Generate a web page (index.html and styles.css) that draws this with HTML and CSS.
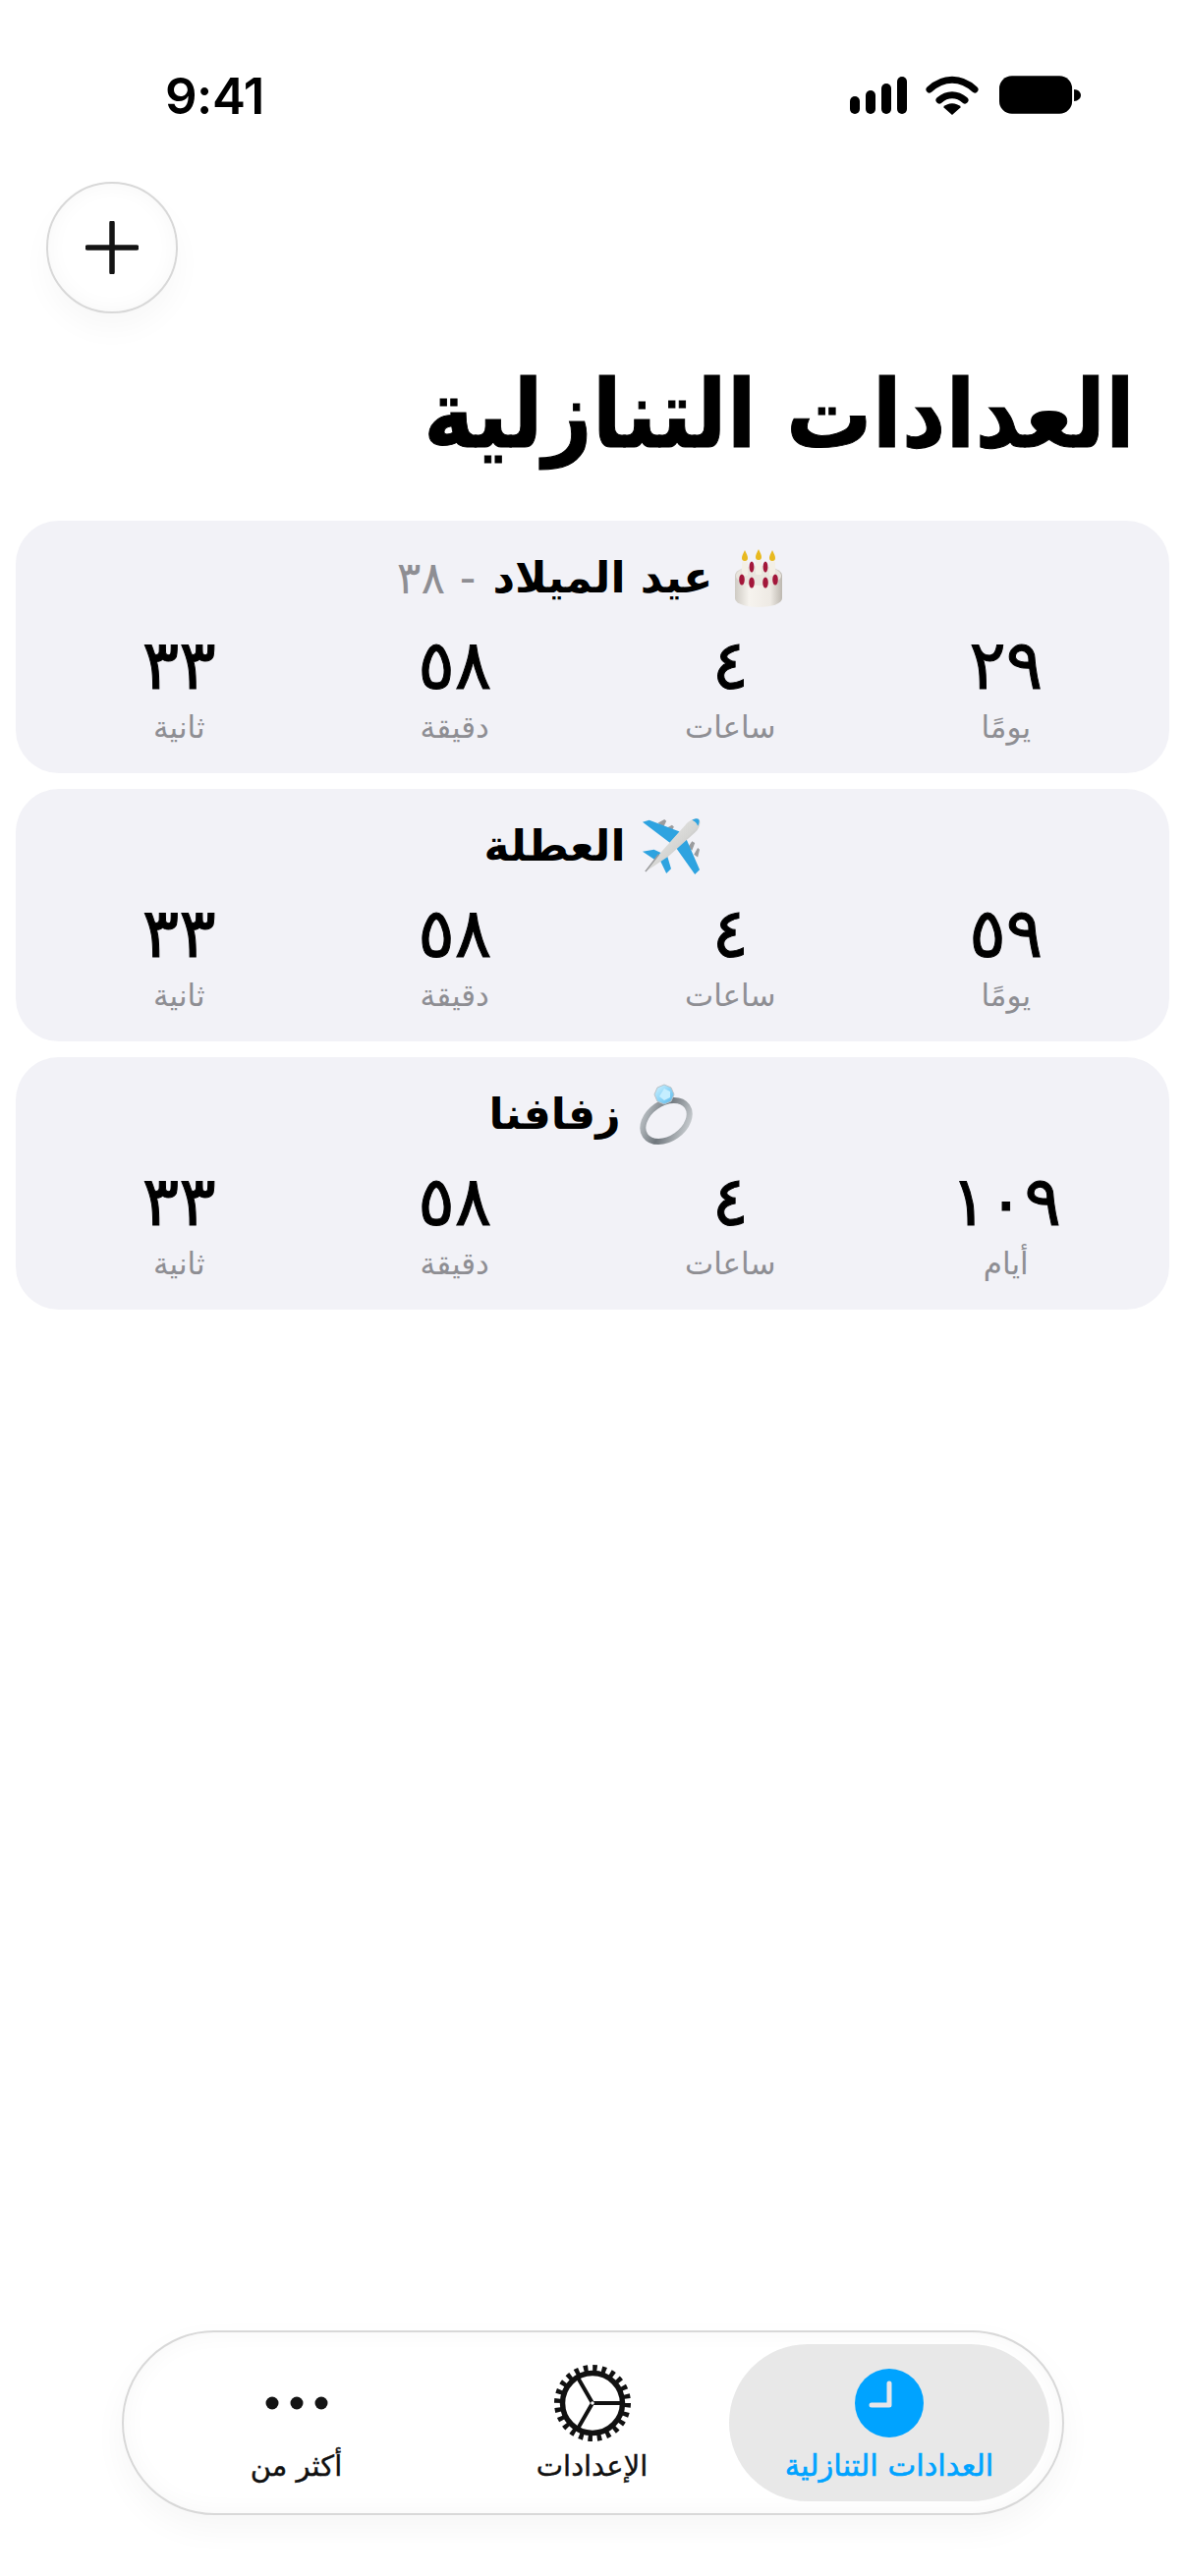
FILE: index.html
```html
<!DOCTYPE html>
<html lang="ar" dir="rtl">
<head>
<meta charset="utf-8">
<title>العدادات التنازلية</title>
<link rel="stylesheet" href="styles.css">
</head>
<body>
<svg class="defs" width="0" height="0" aria-hidden="true">
  <defs>
    <linearGradient id="cakeBody" x1="0" y1="0" x2="1" y2="0">
      <stop offset="0" stop-color="#cfcbc4"/><stop offset=".3" stop-color="#f6f3ee"/><stop offset=".75" stop-color="#eeeae4"/><stop offset="1" stop-color="#bdb8b0"/>
    </linearGradient>
    <linearGradient id="planeBody" x1="0" y1="0" x2="1" y2="1">
      <stop offset="0" stop-color="#f2f2f0"/><stop offset=".55" stop-color="#d5d5d3"/><stop offset="1" stop-color="#85868a"/>
    </linearGradient>
    <linearGradient id="ringBand" x1="0" y1="0" x2="1" y2="1">
      <stop offset="0" stop-color="#c9ced2"/><stop offset=".45" stop-color="#6f767c"/><stop offset="1" stop-color="#d7dbde"/>
    </linearGradient>
    <linearGradient id="gem" x1="0" y1="0" x2="1" y2="1">
      <stop offset="0" stop-color="#d5f3ff"/><stop offset=".5" stop-color="#8fd6f8"/><stop offset="1" stop-color="#5bb6e8"/>
    </linearGradient>
    <symbol id="cake" viewBox="0 0 60 60">
      <path d="M6 28c0-6 10-10 24-10s24 4 24 10v23c0 5-10 9-24 9S6 56 6 51z" fill="url(#cakeBody)"/>
      <ellipse cx="30" cy="28" rx="23" ry="10" fill="#e9e5de"/>
      <rect x="13" y="13" width="6" height="15" rx="1.5" fill="#f3efe6"/><rect x="27" y="10" width="6" height="17" rx="1.5" fill="#f3efe6"/><rect x="41" y="13" width="6" height="15" rx="1.5" fill="#f3efe6"/>
      <path d="M16 2c2 4 3 6 3 8a3 3 0 0 1-6 0c0-2 1-4 3-8zM30 1c2 4 3 6 3 8a3 3 0 0 1-6 0c0-2 1-4 3-8zM44 2c2 4 3 6 3 8a3 3 0 0 1-6 0c0-2 1-4 3-8z" fill="#e8b91f"/>
      <g fill="#a3173a"><ellipse cx="23" cy="19" rx="2.4" ry="5.5"/><ellipse cx="37" cy="19" rx="2.4" ry="5.5"/><ellipse cx="13" cy="32" rx="2.8" ry="5.5"/><ellipse cx="23" cy="35" rx="2.8" ry="5.5"/><ellipse cx="37" cy="35" rx="2.8" ry="5.5"/><ellipse cx="47" cy="32" rx="2.8" ry="5.5"/></g>
    </symbol>
    <symbol id="plane" viewBox="0 0 62 62">
      <path d="M25 13l7-4 2 2-3 5zM17 7l7-4 2 2-3 6zM49 32l4-6 3 2-3 8zM55 40l4-7 2 2-2 8z" fill="#9b9c9e"/>
      <path d="M1 6l7-2 32 12-10 12zM34 30l11-11 16 37-5 5z" fill="#2ea3e0"/>
      <path d="M1 37l12-2 9 4-6 8zM17 41l8-6 6 20-5 5z" fill="#2ea3e0"/>
      <path d="M4 58l17-21L46 9c4-5 11-8 14-6s1 10-4 14L28 42z" fill="url(#planeBody)"/>
      <path d="M53 4c3-2 6-2 7-1s1 4-1 7c-1-3-3-5-6-6z" fill="#2ea3e0"/>
      <path d="M4 58l14-18" stroke="#9b9c9e" stroke-width="1.6"/>
    </symbol>
    <symbol id="ring" viewBox="0 0 58 62">
      <ellipse cx="29" cy="38" rx="26" ry="18" transform="rotate(-35 29 38)" fill="none" stroke="url(#ringBand)" stroke-width="6"/>
      <path d="M20 4l7-3 7 3 3 7-3 7-7 3-7-3-3-7z" fill="url(#gem)" stroke="#b9c2c8" stroke-width="1"/>
      <path d="M27 5l6 3 0 6-6 3-5-4z" fill="#c5eeff"/>
    </symbol>
  </defs>
</svg>

<div class="phone">
  <header class="status" dir="ltr">
    <span class="time">9:41</span>
    <div class="status-icons">
      <svg class="sig" viewBox="0 0 58 38" width="58" height="38"><g fill="#000"><rect x="0" y="20" width="10" height="18" rx="5"/><rect x="16" y="14" width="10" height="24" rx="5"/><rect x="32" y="7" width="10" height="31" rx="5"/><rect x="48" y="0" width="10" height="38" rx="5"/></g></svg>
      <svg class="wifi" viewBox="0 0 54 40" width="54" height="40"><g fill="none" stroke="#000" stroke-width="7" stroke-linecap="round"><path d="M4 14c14-13 32-13 46 0"/><path d="M14 25c8-7 18-7 26 0"/></g><path d="M18 32c5-5 13-5 18 0L27 40z" fill="#000"/></svg>
      <svg class="batt" viewBox="0 0 84 40" width="83" height="40"><rect x="0" y="0" width="75" height="39" rx="13" fill="#000"/><path d="M77 14c4 0 7 3 7 6s-3 6-7 6z" fill="#000"/></svg>
    </div>
  </header>

  <main class="main">
    <div class="toolbar">
      <button class="add" aria-label="إضافة">
        <svg viewBox="0 0 54 54" width="54" height="54"><path d="M27 2v50M2 27h50" stroke="#141414" stroke-width="5.5" stroke-linecap="round"/></svg>
      </button>
    </div>
    <h1 class="title">العدادات التنازلية</h1>

    <section class="cards">
      <article class="card">
        <h2 class="card-title"><svg class="emoji"><use href="#cake"/></svg><span>عيد الميلاد</span><span class="age">- ٣٨</span></h2>
        <div class="units">
          <div class="unit"><b>٢٩</b><small>يومًا</small></div>
          <div class="unit"><b>٤</b><small>ساعات</small></div>
          <div class="unit"><b>٥٨</b><small>دقيقة</small></div>
          <div class="unit"><b>٣٣</b><small>ثانية</small></div>
        </div>
      </article>
      <article class="card">
        <h2 class="card-title"><svg class="emoji"><use href="#plane"/></svg><span>العطلة</span></h2>
        <div class="units">
          <div class="unit"><b>٥٩</b><small>يومًا</small></div>
          <div class="unit"><b>٤</b><small>ساعات</small></div>
          <div class="unit"><b>٥٨</b><small>دقيقة</small></div>
          <div class="unit"><b>٣٣</b><small>ثانية</small></div>
        </div>
      </article>
      <article class="card">
        <h2 class="card-title"><svg class="emoji"><use href="#ring"/></svg><span>زفافنا</span></h2>
        <div class="units">
          <div class="unit"><b>١٠٩</b><small>أيام</small></div>
          <div class="unit"><b>٤</b><small>ساعات</small></div>
          <div class="unit"><b>٥٨</b><small>دقيقة</small></div>
          <div class="unit"><b>٣٣</b><small>ثانية</small></div>
        </div>
      </article>
    </section>
  </main>

  <nav class="tabbar">
    <a class="tab tab-active">
      <svg viewBox="0 0 70 70" width="70" height="70"><circle cx="35" cy="35" r="35" fill="#00a3ff"/><path d="M35 15v22H17" fill="none" stroke="#e6e6ea" stroke-width="5" stroke-linecap="round" stroke-linejoin="round"/></svg>
      <span>العدادات التنازلية</span>
    </a>
    <a class="tab">
      <svg viewBox="0 0 80 80" width="80" height="80"><circle cx="40" cy="40" r="30.5" fill="none" stroke="#111" stroke-width="5.5"/><circle cx="40" cy="40" r="35" fill="none" stroke="#111" stroke-width="8" stroke-dasharray="4.4 4.76"/><g stroke="#111" stroke-width="4"><path d="M40 40H70M40 40L25 14M40 40L25 66"/></g><circle cx="40" cy="40" r="1.8" fill="#fff"/></svg>
      <span>الإعدادات</span>
    </a>
    <a class="tab">
      <svg viewBox="0 0 64 14" width="64" height="14"><g fill="#141414"><circle cx="7" cy="7" r="6.5"/><circle cx="32" cy="7" r="6.5"/><circle cx="57" cy="7" r="6.5"/></g></svg>
      <span>أكثر من</span>
    </a>
  </nav>
</div>
</body>
</html>
```

FILE: styles.css
```css
* { box-sizing: border-box; }
html, body { margin: 0; padding: 0; background: #fff; }
body { font-family: "DejaVu Sans", "Noto Sans", sans-serif; color: #000; }
.defs { position: absolute; }

.phone { width: 1206px; height: 2622px; display: flex; flex-direction: column; overflow: hidden; }

.status { height: 185px; flex: none; display: flex; justify-content: space-between; align-items: flex-start; padding: 70px 106px 0 168px; }
.time { font-family: Inter, "Liberation Sans", sans-serif; font-weight: 600; font-size: 51px; line-height: 56px; letter-spacing: -.5px; }
.status-icons { display: flex; align-items: center; gap: 19px; padding-top: 7px; }
.wifi { margin-right: 2px; }

.main { flex: 1; min-height: 0; }
.toolbar { display: flex; justify-content: flex-end; padding-left: 47px; height: 134px; }
.add { width: 134px; height: 134px; border-radius: 50%; padding: 0; display: flex; align-items: center; justify-content: center; background: #fff; border: 2px solid #d8d8d8; box-shadow: 0 16px 30px rgba(0,0,0,.03), inset 0 0 22px rgba(0,0,0,.035); }

.title { margin: 38px 0 0; height: 154px; font-size: 96px; line-height: 130px; font-weight: 700; white-space: nowrap; transform: scaleX(.91); transform-origin: right center; padding: 0 56px 0 0; -webkit-text-stroke: 1px #000; }

.cards { margin-top: 19px; padding: 0 16px; display: flex; flex-direction: column; gap: 16px; }
.card { height: 257px; background: #f2f2f7; border-radius: 44px; display: flex; flex-direction: column; align-items: stretch; padding: 20px 26px 0; }
.card-title { margin: 0; height: 76px; display: flex; align-items: center; justify-content: center; gap: 17px; font-size: 44px; font-weight: 700; line-height: 76px; white-space: nowrap; }
.emoji { width: 60px; height: 62px; flex: none; }
.age { font-weight: 400; color: #8e8e93; font-size: 46px; }

.units { margin-top: 16px; display: grid; grid-template-columns: repeat(4, 1fr); }
.unit { display: flex; flex-direction: column; align-items: center; }
.unit b { font-size: 70px; line-height: 70px; font-weight: 400; -webkit-text-stroke: 1px #000; }
.unit small { font-size: 31px; line-height: 40px; color: #8e8e93; margin-top: 8px; }

.tabbar { flex: none; width: 959px; height: 188px; margin: 0 123px 62px 124px; padding: 12px 13px 12px 25px; display: flex; align-items: stretch; border-radius: 94px; border: 2px solid #d8d8d8; background: #fff; box-shadow: 0 14px 34px rgba(0,0,0,.04), inset 0 0 26px rgba(0,0,0,.035); }
.tab { flex: 1; display: flex; flex-direction: column; align-items: center; justify-content: flex-start; font-size: 29px; line-height: 40px; color: #111; padding-top: 20px; white-space: nowrap; -webkit-text-stroke: .4px currentColor; }
.tab svg { flex: none; height: 80px; }
.tab span { margin-top: 4px; }
.tab-active { flex: none; width: 326px; margin-left: -11px; border-radius: 81px; background: #e8e8e8; color: #00a3ff; font-size: 30.5px; -webkit-text-stroke: .6px currentColor; }
```
